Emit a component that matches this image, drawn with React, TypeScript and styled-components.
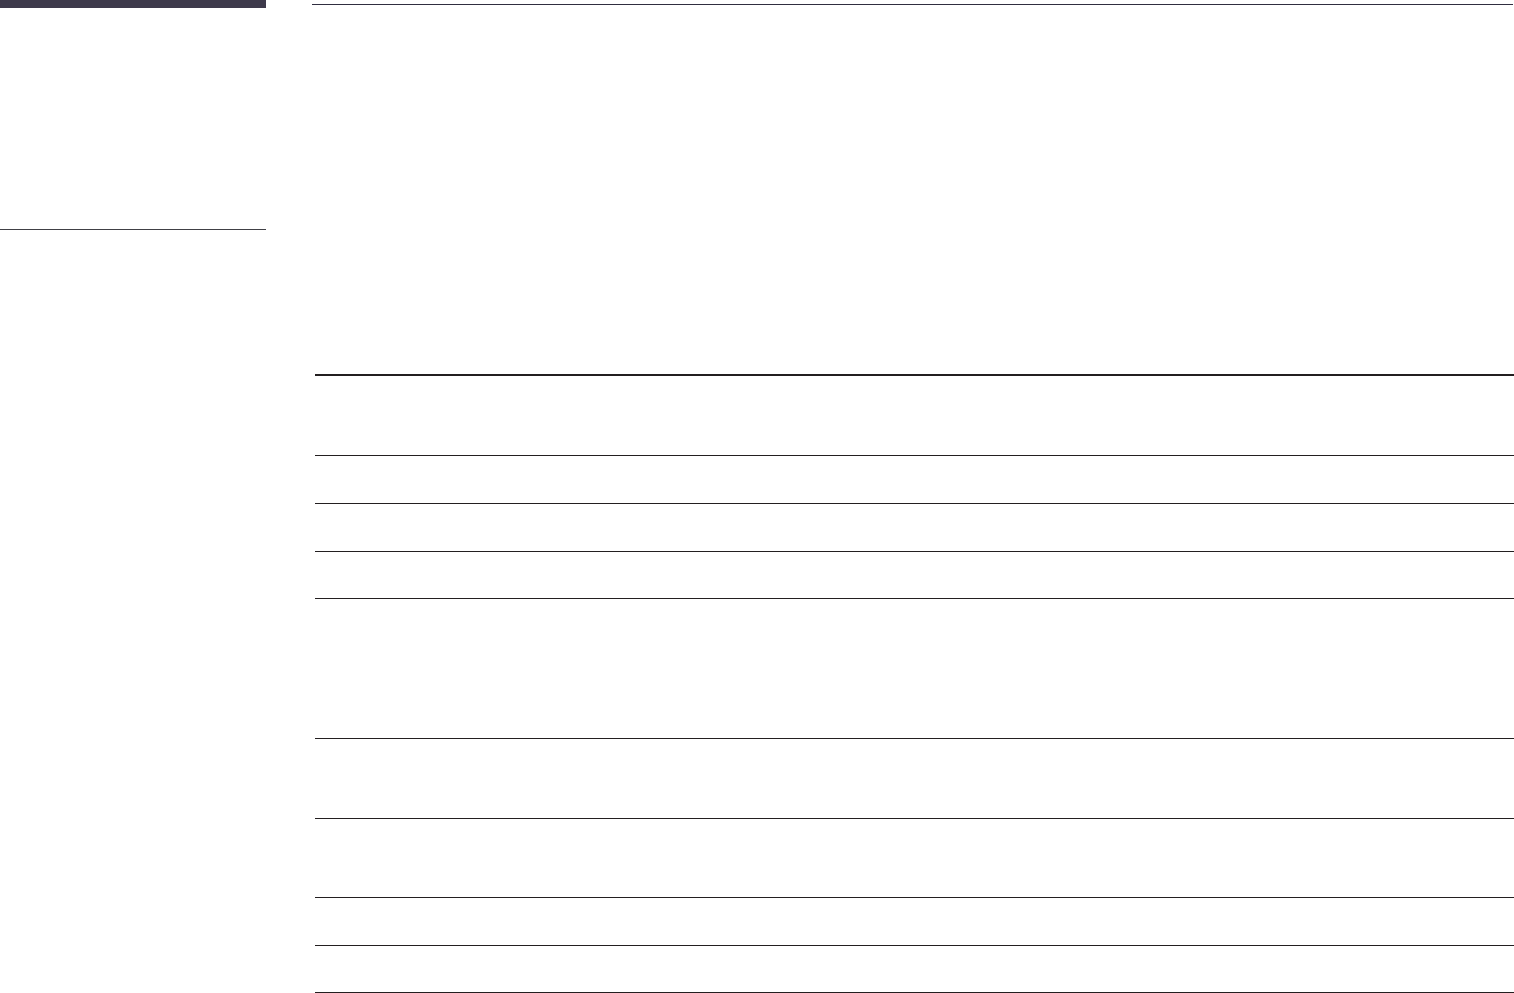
import React from "react";
import styled, { createGlobalStyle } from "styled-components";

const Global = createGlobalStyle`
  html, body { margin: 0; padding: 0; background: #ffffff; }
  body { font-family: "Liberation Sans", Arial, sans-serif; }
`;

const Page = styled.div`
  display: flex;
  width: 1514px;
  height: 993px;
  overflow: hidden;
  background: #ffffff;
`;

const Sidebar = styled.aside`
  width: 266px;
  flex: 0 0 266px;
  display: flex;
  flex-direction: column;
`;

const SideBar = styled.div`
  height: 8px;
  background: #3e3a4b;
`;

const SideRule = styled.div`
  margin-top: 221px;
  height: 1px;
  background: #404045;
`;

const Main = styled.main`
  margin-left: 46px;
  flex: 1;
  display: flex;
  flex-direction: column;
`;

const TopRule = styled.div`
  margin-top: 4px;
  width: 1201px;
  height: 1px;
  background: #302e40;
`;

const Table = styled.div`
  margin-top: 369px;
  margin-left: 3px;
  border-top: 2px solid #231f20;
  display: flex;
  flex-direction: column;
`;

const Row = styled.div<{ $h: number }>`
  height: ${(p) => p.$h}px;
  border-bottom: 1px solid #231f20;
`;

const rows = [79, 47, 47, 46, 139, 79, 78, 47, 46];

export default function App() {
  return (
    <>
      <Global />
      <Page>
        <Sidebar>
          <SideBar />
          <SideRule />
        </Sidebar>
        <Main>
          <TopRule />
          <Table>
            {rows.map((h, i) => (
              <Row key={i} $h={h} />
            ))}
          </Table>
        </Main>
      </Page>
    </>
  );
}
